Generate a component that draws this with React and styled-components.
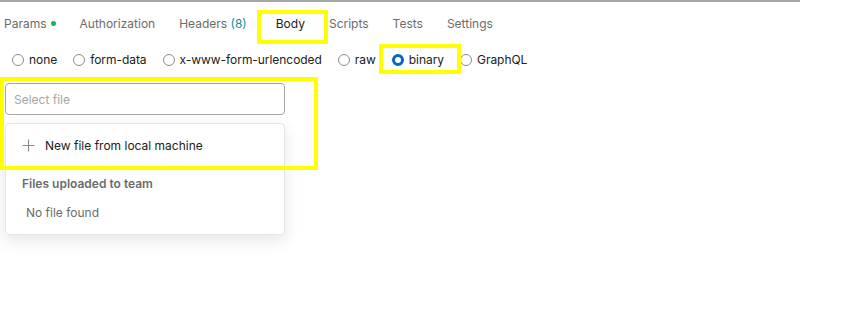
import styled, { createGlobalStyle } from 'styled-components';

const Global = createGlobalStyle`
    html, body {
        margin: 0;
        background: #ffffff;
        font-family: Inter, "Noto Sans", sans-serif;
        -webkit-font-smoothing: antialiased;
    }
`;

const Page = styled.div`
    position: relative;
    width: 857px;
    height: 329px;
    overflow: hidden;
`;

const Pane = styled.div`
    width: 800px;
    border-top: 2px solid #a6a6a6;
    display: flex;
    flex-direction: column;
`;

const Tabs = styled.div`
    display: flex;
    flex-direction: row;
    gap: 24px;
    padding-left: 4px;
    height: 39px;
`;

const Tab = styled.div`
    display: flex;
    align-items: center;
    gap: 4px;
    font-size: 12px;
    color: ${(p) => (p.active ? '#212121' : '#6b6b6b')};
    border-bottom: 1px solid ${(p) => (p.active ? '#ff6c37' : 'transparent')};
    padding-top: 4px;
    margin-left: ${(p) => (p.shift ? `${p.shift}px` : '0')};
`;

const Dot = styled.span`
    width: 5px;
    height: 5px;
    border-radius: 50%;
    background: #0cbb52;
`;

const Count = styled.span`
    color: #0f8ba1;
`;

const Radios = styled.div`
    display: flex;
    flex-direction: row;
    align-items: center;
    gap: 16px;
    padding-left: 12px;
    height: 37px;
`;

const RadioItem = styled.label`
    display: flex;
    align-items: center;
    gap: 5px;
    font-size: 12px;
    color: #212121;
    letter-spacing: -0.05px;
`;

const Circle = styled.span`
    box-sizing: border-box;
    width: 12px;
    height: 12px;
    border-radius: 50%;
    border: ${(p) => (p.checked ? '3px solid #0265d2' : '1px solid #8c8c8c')};
    background: #ffffff;
`;

const FileArea = styled.div`
    display: flex;
    flex-direction: column;
    gap: 8px;
    padding: 5px 0 0 5px;
    width: 280px;
`;

const SelectBox = styled.div`
    box-sizing: border-box;
    height: 32px;
    border: 1px solid #a6a6a6;
    border-radius: 4px;
    display: flex;
    align-items: center;
    padding-left: 8px;
    font-size: 12px;
    color: #a6a6a6;
`;

const Menu = styled.div`
    box-sizing: border-box;
    height: 112px;
    border: 1px solid #e6e6e6;
    border-radius: 4px;
    box-shadow: 0 6px 16px rgba(0, 0, 0, 0.1);
    display: flex;
    flex-direction: column;
    padding-top: 9px;
`;

const MenuItem = styled.div`
    display: flex;
    align-items: center;
    gap: 10px;
    height: 24px;
    padding-left: 16px;
    font-size: 12px;
    color: #212121;
`;

const SectionTitle = styled.div`
    margin-top: 19px;
    padding-left: 16px;
    font-size: 12px;
    font-weight: 600;
    color: #6b6b6b;
`;

const Empty = styled.div`
    margin-top: 14px;
    padding-left: 20px;
    font-size: 12px;
    color: #6b6b6b;
`;

const Mark = styled.div`
    position: absolute;
    box-sizing: border-box;
    border: 4px solid #ffff00;
    left: ${(p) => p.x}px;
    top: ${(p) => p.y}px;
    width: ${(p) => p.w}px;
    height: ${(p) => p.h}px;
    pointer-events: none;
`;

const tabs = ['Authorization', 'Headers', 'Body', 'Scripts', 'Tests', 'Settings'];
const modes = ['none', 'form-data', 'x-www-form-urlencoded', 'raw', 'binary', 'GraphQL'];

const Plus = () => (
    <svg width="13" height="13" viewBox="0 0 13 13" fill="none" stroke="#8c8c8c" strokeWidth="1.2">
        <path d="M6.5 0.5v12M0.5 6.5h12" />
    </svg>
);

export default function App() {
    return (
        <Page>
            <Global />
            <Pane>
                <Tabs>
                    <Tab>
                        Params <Dot />
                    </Tab>
                    {tabs.map((t) => (
                        <Tab key={t} active={t === 'Body'} shift={t === 'Body' ? 5 : 0}>
                            {t === 'Headers' ? (
                                <span>
                                    Headers <Count>(8)</Count>
                                </span>
                            ) : (
                                t
                            )}
                        </Tab>
                    ))}
                </Tabs>
                <Radios>
                    {modes.map((m) => (
                        <RadioItem key={m}>
                            <Circle checked={m === 'binary'} />
                            {m}
                        </RadioItem>
                    ))}
                </Radios>
                <FileArea>
                    <SelectBox>Select file</SelectBox>
                    <Menu>
                        <MenuItem>
                            <Plus />
                            New file from local machine
                        </MenuItem>
                        <SectionTitle>Files uploaded to team</SectionTitle>
                        <Empty>No file found</Empty>
                    </Menu>
                </FileArea>
            </Pane>
            <Mark x={257} y={10} w={71} h={34} />
            <Mark x={379} y={44} w={82} h={30} />
            <Mark x={0} y={77} w={318} h={93} />
        </Page>
    );
}
